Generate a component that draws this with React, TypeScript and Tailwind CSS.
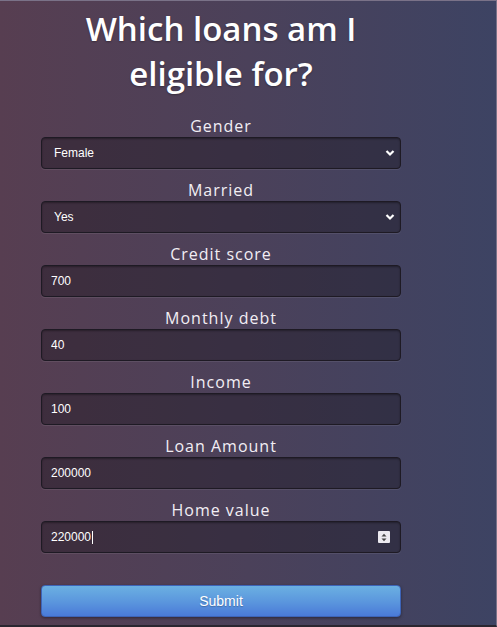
import React from "react";

const fields = [
  { label: "Gender", kind: "select", value: "Female", options: ["Female", "Male"] },
  { label: "Married", kind: "select", value: "Yes", options: ["Yes", "No"] },
  { label: "Credit score", kind: "input", value: "700" },
  { label: "Monthly debt", kind: "input", value: "40" },
  { label: "Income", kind: "input", value: "100" },
  { label: "Loan Amount", kind: "input", value: "200000" },
];

const boxCls =
  "h-[32px] w-full rounded-[4px] border border-[#1e1a24] bg-[rgba(22,16,26,0.36)] text-[12px] text-white shadow-[inset_0_1px_2px_rgba(0,0,0,0.35),0_1px_0_rgba(255,255,255,0.08)] outline-none";

const labelCls =
  "h-[24px] text-center text-[16px] leading-[26px] tracking-[1px] text-[#f2eef4]";

function Chevron() {
  return (
    <svg
      className="pointer-events-none absolute right-[6px] top-[12px]"
      width="10"
      height="8"
      viewBox="0 0 10 8"
    >
      <path d="M1.5 2 L5 5.5 L8.5 2" fill="none" stroke="#fff" strokeWidth="2.2" />
    </svg>
  );
}

export default function App() {
  return (
    <div
      className="h-[627px] w-[497px] overflow-hidden border-t border-r border-[#7a7288] border-b-2 border-b-[#2a2630] bg-[linear-gradient(90deg,#573e51_0%,#4b415a_50%,#3d4363_100%)]"
      style={{ fontFamily: '"Open Sans", sans-serif' }}
    >
      <div className="ml-[41px] w-[360px]">
        <h1 className="mt-[5px] h-[91px] text-center text-[33px] font-semibold leading-[45px] text-white [text-shadow:0_1px_2px_rgba(0,0,0,0.3)]">
          Which loans am I
          <br />
          eligible for?
        </h1>

        <form className="mt-[16px] flex flex-col">
          {fields.map((f) => (
            <div key={f.label} className="mb-[8px] flex flex-col">
              <label className={labelCls}>{f.label}</label>
              {f.kind === "select" ? (
                <div className="relative">
                  <select
                    defaultValue={f.value}
                    className={boxCls + " appearance-none pl-[12px]"}
                    style={{ fontFamily: '"Liberation Sans", Arial, sans-serif' }}
                  >
                    {f.options!.map((o) => (
                      <option key={o} className="text-black">
                        {o}
                      </option>
                    ))}
                  </select>
                  <Chevron />
                </div>
              ) : (
                <input
                  readOnly
                  value={f.value}
                  className={boxCls + " pl-[9px]"}
                  style={{ fontFamily: '"Liberation Sans", Arial, sans-serif' }}
                />
              )}
            </div>
          ))}

          <div className="flex flex-col">
            <label className={labelCls}>Home value</label>
            <div
              className={boxCls + " relative flex items-center pl-[9px]"}
              style={{ fontFamily: '"Liberation Sans", Arial, sans-serif' }}
            >
              <span>220000</span>
              <span className="ml-[1px] h-[13px] w-[1px] bg-white" />
              <span className="absolute right-[10px] top-[9px] flex h-[12px] w-[12px] flex-col items-center justify-center gap-[1px] rounded-[1px] bg-[#eceaf0]">
                <svg width="6" height="9" viewBox="0 0 6 9">
                  <path d="M0.5 3.5 L3 0.8 L5.5 3.5 Z" fill="#444" />
                  <path d="M0.5 5.5 L3 8.2 L5.5 5.5 Z" fill="#444" />
                </svg>
              </span>
            </div>
          </div>

          <button
            type="button"
            className="mt-[32px] h-[32px] w-full rounded-[4px] border border-[#3d64b8] bg-[linear-gradient(180deg,#6bb0e2_0%,#5a95dd_55%,#4a7ad8_100%)] text-[14px] text-white shadow-[0_1px_3px_rgba(0,0,0,0.4)] [text-shadow:0_1px_1px_rgba(0,0,0,0.25)]"
            style={{ fontFamily: '"Liberation Sans", Arial, sans-serif' }}
          >
            Submit
          </button>
        </form>
      </div>
    </div>
  );
}
